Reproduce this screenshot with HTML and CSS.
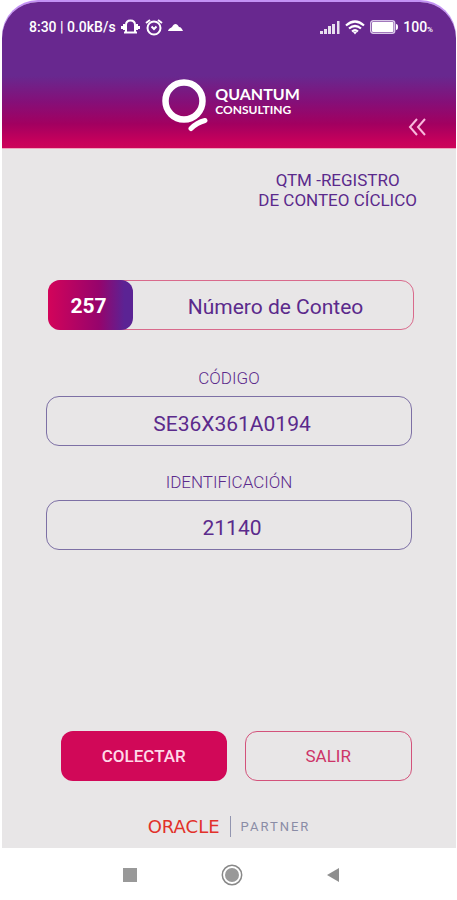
FILE: index.html
```html
<!DOCTYPE html>
<html lang="es">
<head>
  <meta charset="UTF-8">
  <meta name="viewport" content="width=device-width, initial-scale=1.0">
  <title>Registro de Conteo Cíclico</title>
  <link rel="stylesheet" href="styles.css">
</head>

<body>
  <div id="phone">
    <header>
      <div class="status-bar">
        <div class="status-left">
          <span>8:30 | 0.0kB/s</span>
          <svg width="19" height="16" viewBox="0 0 19 16" fill="none" stroke="#fff">
            <path d="M5 13V6Q5 1.500 9.500 1.500T14 6v7" stroke-width="2"/>
            <path d="M3 13.500h13" stroke-width="2"/>
            <path d="M3 5v6M16 5v6" stroke-width="2"/>
            <path d="M1 7v3M18 7v3" stroke-width="2"/>
          </svg>
          <svg width="18" height="17" viewBox="0 0 18 17" fill="none" stroke="#fff">
            <circle cx="9" cy="9" r="6.500" stroke-width="2"/>
            <path d="M1 4l4-3M17 4l-4-3" stroke-width="2"/>
            <path d="M6.500 7.500L9 10l2.500-2.500" stroke-width="2"/>
          </svg>
          <svg width="15" height="8" viewBox="0 0 15 8" fill="#fff">
            <path d="M0 8C1 5 3 5 4 4C6 0 9 0 11 4C13 4 14 6 15 8z"/>
          </svg>
        </div>
        <div class="status-right">
          <svg width="20" height="14" viewBox="0 0 20 14" fill="#fff">
            <path d="M0 11h3v3H0zM4 9h3v5H4zM8 6h3v8H8zM12 4h3v10h-3zM17 1h2.500v13H17z" opacity=".85"/>
          </svg>
          <svg width="20" height="15" viewBox="0 0 20 15" fill="none" stroke="#fff" stroke-width="2.200">
            <path d="M1 5.500q9-8 18 0M4 8.500q6-5 12 0M7 11.500q3-2.500 6 0"/>
            <path d="M8 12h4l-2 2.500z" fill="#fff" stroke="none"/>
          </svg>
          <svg width="28" height="14" viewBox="0 0 28 14">
            <rect x=".7" y=".7" width="24" height="12.600" rx="2.500" fill="none" stroke="#d9c8e8" stroke-width="1.400"/>
            <rect x="2" y="2" width="21.500" height="10" rx="1" fill="#fff"/>
            <path d="M26 4q2 0 2 3t-2 3z" fill="#fff"/>
          </svg>
          <span class="battery">100<small>%</small></span>
        </div>
      </div>

      <div class="logo">
        <svg width="47" height="53" viewBox="0 0 47 53" fill="none" stroke="#fff">
          <circle cx="22" cy="22" r="18.500" stroke-width="6.500"/>
          <path d="M29 49.500q6-6 14-8" stroke-width="5" stroke-linecap="round"/>
        </svg>
        <div class="logo-text">
          <strong>QUANTUM</strong>
          <span>CONSULTING</span>
        </div>
      </div>

      <button class="back" aria-label="Volver">
        <svg width="18" height="18" viewBox="0 0 18 18" fill="none" stroke="#f9b9dc" stroke-width="2">
          <path d="M9 1L2 9l7 8M17 1l-7 8 7 8"/>
        </svg>
      </button>
    </header>

    <main>
      <h1>QTM -REGISTRO<br>DE CONTEO CÍCLICO</h1>

      <form>
        <div class="count">
          <span class="count-badge">257</span>
          <span class="count-label">Número de Conteo</span>
        </div>

        <label for="codigo">CÓDIGO</label>
        <input type="text" id="codigo" value="SE36X361A0194">

        <label for="identificacion">IDENTIFICACIÓN</label>
        <input type="text" id="identificacion" value="21140">
      </form>

      <div class="actions">
        <button class="primary">COLECTAR</button>
        <button class="outline">SALIR</button>
      </div>

      <footer>
        <span class="oracle">ORACLE</span>
        <span class="partner">PARTNER</span>
      </footer>
    </main>

    <nav>
      <button aria-label="Recientes">
        <svg width="14" height="14" viewBox="0 0 14 14"><path d="M0 0h14v14H0z" fill="#999"/></svg>
      </button>
      <button aria-label="Inicio">
        <svg width="22" height="22" viewBox="0 0 22 22">
          <circle cx="11" cy="11" r="9.700" fill="none" stroke="#888" stroke-width="1.500"/>
          <circle cx="11" cy="11" r="7" fill="#999"/>
        </svg>
      </button>
      <button aria-label="Atrás">
        <svg width="12" height="14" viewBox="0 0 12 14"><path d="M12 0v14L0 7z" fill="#8f8f8f"/></svg>
      </button>
    </nav>
  </div>
</body>
</html>
```

FILE: styles.css
```css
* {
  box-sizing: border-box;
}

body {
  margin: 0;
  background: #fff;
  font-family: Roboto, "Liberation Sans", sans-serif;
  color: #5b2a8c;
}

#phone {
  display: flex;
  flex-direction: column;
  min-height: 100vh;
  padding: 2px 1px 0 2px;
}

button {
  font-family: inherit;
  padding: 0;
  border: none;
  background: none;
  cursor: pointer;
}

svg {
  display: block;
  flex: none;
}

header {
  position: relative;
  height: 147px;
  padding: 15px 23px 0 27px;
  border-radius: 36px 36px 0 0;
  border-bottom: 1px solid #eea5bd;
  background: linear-gradient(#68288f 0, #68288f 74px, #850f78 100px, #a20060 122px, #c8005b 140px, #cc0459 100%);
  box-shadow: 0 -2px 0 #c391f5;
  color: #fff;
}

.status-bar {
  display: flex;
  justify-content: space-between;
  align-items: center;
  height: 20px;
  font-size: 14px;
  font-weight: 500;
}

.status-left,
.status-right {
  display: flex;
  align-items: center;
  gap: 5px;
}

.battery small {
  font-size: 8px;
}

.logo {
  display: flex;
  justify-content: center;
  gap: 6px;
  margin-top: 42px;
}

.logo-text {
  display: flex;
  flex-direction: column;
  padding-top: 7px;
  font-family: Lato, sans-serif;
}

.logo-text strong {
  font-size: 16px;
  line-height: 16px;
  font-weight: 700;
}

.logo-text span {
  font-size: 12px;
  line-height: 15px;
  font-weight: 700;
}

.back {
  position: absolute;
  right: 30px;
  bottom: 12px;
}

main {
  flex: 1;
  display: flex;
  flex-direction: column;
  padding: 21px 44px 11px;
  background: #e8e6e7;
}

h1 {
  align-self: flex-end;
  margin: 0 -5px 0 0;
  font-size: 17px;
  line-height: 20px;
  font-weight: 400;
  text-align: center;
}

form {
  display: flex;
  flex-direction: column;
  margin-top: 70px;
}

.count {
  display: flex;
  height: 50px;
  margin: 0 -2px 38px 2px;
  border: 1px solid #d96a8c;
  border-radius: 13px;
  font-size: 21px;
  line-height: 52px;
  text-align: center;
}

.count-badge {
  width: 85px;
  margin: -1px;
  padding-right: 4px;
  border-radius: 12px;
  background: linear-gradient(90deg, #d3045a, #96046c 60%, #5b2394 90%);
  color: #fff;
  font-weight: 700;
}

.count-label {
  flex: 1;
  padding-left: 6px;
}

label {
  margin-bottom: 7px;
  font-size: 17px;
  line-height: 21px;
  font-weight: 300;
  text-align: center;
}

input {
  width: 100%;
  height: 50px;
  margin: 0 0 26px;
  padding: 5px 12px 0 18px;
  border: 1px solid #7d70a5;
  border-radius: 13px;
  background: none;
  font-family: inherit;
  font-size: 21px;
  text-align: center;
  color: #5b2a8c;
}

.actions {
  display: flex;
  gap: 18px;
  margin: auto 0 0 15px;
}

.actions button {
  flex: 1;
  height: 50px;
  border-radius: 12px;
  font-size: 17px;
}

.actions .primary {
  background: #d10858;
  color: #ffd9e8;
  font-weight: 500;
}

.actions .outline {
  border: 1px solid #d3527b;
  color: #cd3467;
}

footer {
  display: flex;
  justify-content: center;
  align-items: center;
  margin-top: 35px;
}

.oracle {
  padding-right: 10px;
  font-family: "DejaVu Sans", sans-serif;
  font-size: 18px;
  line-height: 21px;
  color: #e2312a;
}

.partner {
  padding-left: 10px;
  border-left: 1px solid #9295b0;
  font-size: 13px;
  line-height: 21px;
  letter-spacing: 2px;
  color: #8a8ca6;
}

nav {
  display: flex;
  justify-content: space-between;
  align-items: center;
  height: 52px;
  padding: 2px 117px 0 121px;
}
```
